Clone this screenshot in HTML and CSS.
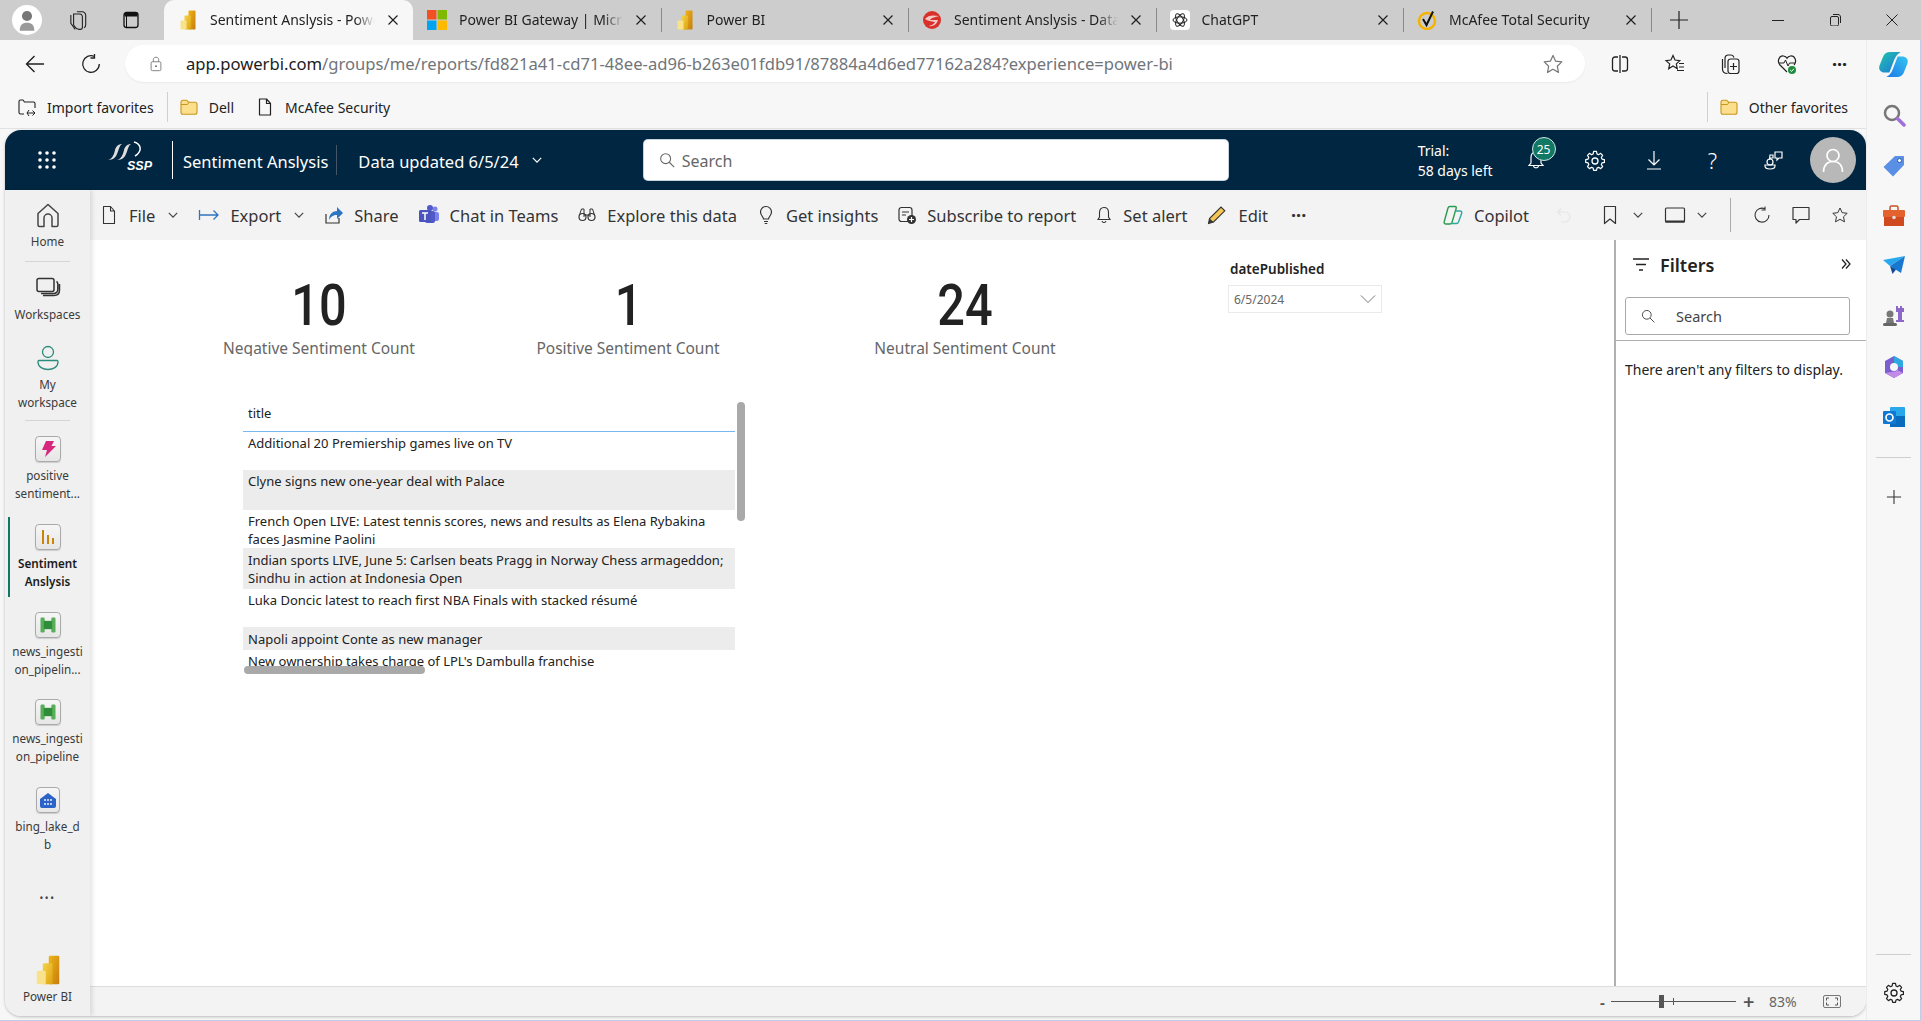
FILE: index.html
```html
<!DOCTYPE html>
<html lang="en">
<head>
<meta charset="utf-8">
<title>Sentiment Anslysis - Power BI</title>
<link rel="stylesheet" href="styles.css">
</head>
<body>
<svg class="sprite" aria-hidden="true">
  <defs>
    <linearGradient id="pbA" x1="0" x2="1" y1="0" y2="1"><stop offset="0" stop-color="#eeb51a"/><stop offset="1" stop-color="#c67c0c"/></linearGradient>
    <linearGradient id="pbB" x1="0" x2="1" y1="0" y2="1"><stop offset="0" stop-color="#f6d34a"/><stop offset="1" stop-color="#dda20f"/></linearGradient>
    <linearGradient id="cpA" x1="0" x2="1" y1="0" y2="1"><stop offset="0" stop-color="#1fc8a8"/><stop offset="1" stop-color="#1f6fe0"/></linearGradient>
    <linearGradient id="cpB" x1="0" x2="1" y1="1" y2="0"><stop offset="0" stop-color="#1e78e8"/><stop offset="1" stop-color="#33c6f0"/></linearGradient>
    <symbol id="pbi" viewBox="0 0 20 20"><rect x="10.500" y="0.500" width="7" height="19" rx="0.800" fill="url(#pbA)"/><rect x="6.500" y="5.500" width="6.500" height="14" rx="0.800" fill="url(#pbB)"/><rect x="2.500" y="10.500" width="6" height="9" rx="0.800" fill="#f9e28c"/></symbol>
    <symbol id="close" viewBox="0 0 12 12"><path d="M1.500 1.500l9 9M10.500 1.500l-9 9" fill="none" stroke="#1a1a1a" stroke-width="1.100"/></symbol>
    <symbol id="folder" viewBox="0 0 20 20"><path d="M2 5.200C2 4 2.800 3.200 4 3.200h3.600l2 2H16c1.200 0 2 .8 2 2v8c0 1.200-.8 2-2 2H4c-1.200 0-2-.8-2-2z" fill="#fbdf8c" stroke="#c8961c" stroke-width="1.100"/><path d="M2 7.500h6.500l1.500-2.200" fill="none" stroke="#c8961c" stroke-width="1"/></symbol>
    <symbol id="chev" viewBox="0 0 10 10"><path d="M1.500 3.200L5 6.800l3.500-3.600" fill="none" stroke="currentColor" stroke-width="1"/></symbol>
    <symbol id="gear" viewBox="0 0 24 24"><path d="M10.400 2.600h3.200l.6 2.800 1.700.8 2.500-1.500 2.200 2.300-1.500 2.400.8 1.800 2.700.6v3.200l-2.700.6-.8 1.800 1.500 2.400-2.200 2.300-2.500-1.500-1.700.8-.6 2.700h-3.200l-.6-2.700-1.700-.8-2.500 1.500-2.200-2.300 1.500-2.400-.8-1.800-2.700-.6v-3.200l2.700-.6.800-1.800-1.500-2.400 2.200-2.300 2.500 1.500 1.700-.8z" transform="translate(1.500 1.200) scale(.88)" fill="none" stroke="currentColor" stroke-width="1.400" stroke-linejoin="round"/><circle cx="12" cy="13" r="3" fill="none" stroke="currentColor" stroke-width="1.300"/></symbol>
    <symbol id="star" viewBox="0 0 20 20"><path d="M10 2.200l2.400 5.200 5.600.7-4.100 3.900 1.100 5.600-5-2.800-5 2.800 1.100-5.600L2 8.100l5.600-.7z" fill="none" stroke="currentColor" stroke-width="1.100" stroke-linejoin="round"/></symbol>
    <symbol id="search" viewBox="0 0 20 20"><circle cx="8.500" cy="8.500" r="5.500" fill="none" stroke="currentColor" stroke-width="1.200"/><path d="M12.500 12.500L18 18" stroke="currentColor" stroke-width="1.200"/></symbol>
    <symbol id="pipeline" viewBox="0 0 24 24"><rect x="3" y="3" width="5" height="18" rx="1.500" fill="#58ad58"/><rect x="16" y="3" width="5" height="18" rx="1.500" fill="#58ad58"/><rect x="7" y="7" width="10" height="10" fill="#2f8d3a"/></symbol>
  </defs>
</svg>

<header class="tabstrip">
  <div class="strip-left">
    <span class="profile"><svg class="ic-profile" viewBox="0 0 16 20"><circle cx="8" cy="6" r="4.500" fill="#777"/><path d="M1.500 19c0-5 2.500-7 6.500-7s6.500 2 6.500 7z" fill="#999"/></svg></span>
    <svg class="ic22 strip-ic" viewBox="0 0 20 20"><path d="M9 2.500h5c1.500 0 3 1.500 3 3v9c0 1-.5 2-1.500 2.500" fill="none" stroke="#222"/><path d="M6 4.500h5.500c1.500 0 2.500 1.500 2.500 3v9c0 1-1 2-2 2h-1c-1.500 0-3-1-4-2.500l-1-1.500V5.500z" fill="none" stroke="#222"/><path d="M3.500 5.500v7.500l4 5.500" fill="none" stroke="#222"/></svg>
    <svg class="ic20 strip-ic2" viewBox="0 0 20 20"><rect x="3" y="2.500" width="14" height="15" rx="2.500" fill="none" stroke="#111" stroke-width="1.300"/><path d="M3.500 3h13v3.500h-13z" fill="#111"/><path d="M5.500 6v11" stroke="#111"/></svg>
  </div>
  <div class="tab tab-active"><svg class="tab-ic"><use href="#pbi"/></svg><span class="tab-title">Sentiment Anslysis - Power BI</span><svg class="tab-x"><use href="#close"/></svg></div>
  <div class="tab"><svg class="tab-ic" viewBox="0 0 20 20"><rect x="0" y="0" width="9.500" height="9.500" fill="#f25022"/><rect x="10.500" y="0" width="9.500" height="9.500" fill="#7fba00"/><rect x="0" y="10.500" width="9.500" height="9.500" fill="#00a4ef"/><rect x="10.500" y="10.500" width="9.500" height="9.500" fill="#ffb900"/></svg><span class="tab-title">Power BI Gateway | Microsoft</span><svg class="tab-x"><use href="#close"/></svg></div>
  <div class="tab tab-sep"><svg class="tab-ic"><use href="#pbi"/></svg><span class="tab-title">Power BI</span><svg class="tab-x"><use href="#close"/></svg></div>
  <div class="tab tab-sep"><svg class="tab-ic" viewBox="0 0 20 20"><circle cx="10" cy="10" r="9" fill="#d9302a"/><path d="M3 9c3-4 8-4 14-3-4 1-8 2-9 4h8c-1 4-5 7-9 6 3-1 5-2 6-4-4-1-7-1-10-3z" fill="#f3c9c5"/></svg><span class="tab-title">Sentiment Anslysis - Data Factory</span><svg class="tab-x"><use href="#close"/></svg></div>
  <div class="tab tab-sep"><svg class="tab-ic" viewBox="0 0 20 20"><rect width="20" height="20" rx="4" fill="#fff"/><g fill="none" stroke="#222" stroke-width="1"><ellipse cx="10" cy="10" rx="7" ry="3.200"/><ellipse cx="10" cy="10" rx="7" ry="3.200" transform="rotate(60 10 10)"/><ellipse cx="10" cy="10" rx="7" ry="3.200" transform="rotate(120 10 10)"/></g></svg><span class="tab-title">ChatGPT</span><svg class="tab-x"><use href="#close"/></svg></div>
  <div class="tab tab-sep"><svg class="tab-ic" viewBox="0 0 20 20"><circle cx="10" cy="11" r="8" fill="none" stroke="#f5b301" stroke-width="2.500"/><path d="M6 9l3.500 6L16 1.500" fill="none" stroke="#111" stroke-width="2"/></svg><span class="tab-title">McAfee Total Security</span><svg class="tab-x"><use href="#close"/></svg></div>
  <div class="tab-end">
    <svg class="ic20" viewBox="0 0 20 20"><path d="M10 1v18M1 10h18" stroke="#222" stroke-width="1.200"/></svg>
  </div>
  <div class="winctl">
    <svg class="ic12" viewBox="0 0 12 12"><path d="M0 6.500h12" stroke="#222"/></svg>
    <svg class="ic12" viewBox="0 0 12 12"><rect x="1.500" y="2.500" width="8" height="9.500" rx="1.500" fill="none" stroke="#222"/><path d="M4 .5h5c1.500 0 2.500 1 2.500 2.500v6" fill="none" stroke="#222"/></svg>
    <svg class="ic12" viewBox="0 0 12 12"><path d="M.5.500l11 11M11.500.500l-11 11" stroke="#222"/></svg>
  </div>
</header>

<div class="below">
  <div class="main">
    <div class="addr-row">
      <svg class="ic22 back" viewBox="0 0 22 22"><path d="M20 11H3M10.500 3L2.500 11l8 8" fill="none" stroke="#222" stroke-width="1.400"/></svg>
      <svg class="ic22 reload" viewBox="0 0 22 22"><path d="M14.500 3.500A8.300 8.300 0 1 0 19.300 11" fill="none" stroke="#222" stroke-width="1.300"/><path d="M14.500 1v4h-4" fill="none" stroke="#222" stroke-width="1.300"/></svg>
      <div class="addr">
        <svg class="ic16 lock" viewBox="0 0 16 18"><rect x="2.500" y="6.500" width="11" height="10" rx="1.500" fill="none" stroke="#777"/><path d="M5 6.500V4c0-3.500 6-3.500 6 0v2.500" fill="none" stroke="#777"/><circle cx="8" cy="11.500" r="1" fill="#555"/></svg>
        <span class="url"><b>app.powerbi.com</b>/groups/me/reports/fd821a41-cd71-48ee-ad96-b263e01fdb91/87884a4d6ed77162a284?experience=power-bi</span>
        <svg class="ic22 addr-star"><use href="#star"/></svg>
      </div>
      <div class="addr-tools">
        <svg class="ic20" viewBox="0 0 20 20"><path d="M8 3H5C3.500 3 2.500 4 2.500 5.500v9C2.500 16 3.500 17 5 17h3M12 3h3c1.500 0 2.500 1 2.500 2.500v9c0 1.500-1 2.500-2.500 2.500h-3M10 1v18" fill="none" stroke="#222" stroke-width="1.300"/></svg>
        <svg class="ic22" viewBox="0 0 22 22"><path d="M9 2.500l2 4.500 4.800.6-3.500 3.300 1 4.900L9 13l-4.300 2.800 1-4.900L2 7.600 6.900 7z" fill="none" stroke="#222" stroke-width="1.200"/><path d="M15 10.500h5M15 14h5M13 17.500h7" stroke="#222" stroke-width="1.200"/></svg>
        <svg class="ic22" viewBox="0 0 22 22"><path d="M5 15V5.500C5 3.500 6.500 2 8.500 2H11c1.500 0 2.500 1 3 2.500" fill="none" stroke="#222" stroke-width="1.200"/><path d="M2.500 6v10c0 3 2 4.500 5 4.500" fill="none" stroke="#222" stroke-width="1.200"/><rect x="8" y="6" width="11" height="14.500" rx="2.500" fill="none" stroke="#222" stroke-width="1.200"/><path d="M13.500 10v7M10 13.500h7" stroke="#222" stroke-width="1.200"/></svg>
        <svg class="ic22" viewBox="0 0 22 22"><path d="M11 19L4 12C.5 8 3.500 2.500 7.500 3c1.600.2 2.800 1 3.500 2.300C11.700 4 13 3.200 14.500 3c4-.5 7 5 3.500 9" fill="none" stroke="#222" stroke-width="1.200"/><path d="M3 10h5l1.500-3 2.500 6 1.500-3H19" fill="none" stroke="#222"/><circle cx="16" cy="17" r="4" fill="#1e8e3e"/><path d="M14.200 17l1.400 1.400 2.300-2.600" fill="none" stroke="#fff"/></svg>
        <span class="more">···</span>
      </div>
    </div>
    <div class="fav-row">
      <svg class="ic20" viewBox="0 0 20 20"><path d="M7 17H3.500C2.500 17 2 16.500 2 15.500v-11C2 3.500 2.500 3 3.500 3H6l1.500 2h9c1 0 1.500.5 1.500 1.500V11" fill="none" stroke="#222" stroke-width="1.100"/><path d="M10 16h8M15.500 13.500L18 16l-2.500 2.500M12 13l-2 3 2 3" fill="none" stroke="#222"/></svg>
      <span class="fav-text">Import favorites</span>
      <span class="fav-div"></span>
      <svg class="ic20"><use href="#folder"/></svg>
      <span class="fav-text fav-gap">Dell</span>
      <svg class="ic20" viewBox="0 0 20 20"><path d="M4.500 2h7l4 4.500V18h-11z M11.500 2v4.500h4" fill="none" stroke="#222" stroke-width="1.200" stroke-linejoin="round"/></svg>
      <span class="fav-text">McAfee Security</span>
      <span class="fav-spacer"></span>
      <span class="fav-div"></span>
      <svg class="ic20"><use href="#folder"/></svg>
      <span class="fav-text">Other favorites</span>
    </div>

    <div class="app">
      <div class="appbar">
        <svg class="waffle" viewBox="0 0 20 20"><g fill="#fff"><circle cx="3" cy="3" r="1.800"/><circle cx="10" cy="3" r="1.800"/><circle cx="17" cy="3" r="1.800"/><circle cx="3" cy="10" r="1.800"/><circle cx="10" cy="10" r="1.800"/><circle cx="17" cy="10" r="1.800"/><circle cx="3" cy="17" r="1.800"/><circle cx="10" cy="17" r="1.800"/><circle cx="17" cy="17" r="1.800"/></g></svg>
        <div class="ssp">
          <svg class="ssp-mark" viewBox="0 0 40 20"><path d="M1 19C5 18 7 14 8 9 9 5 12 3 15 3 12 5 12 9 10 13 9 16 6 19 1 19z" fill="#ddd"/><path d="M10 19C14 18 16 14 17 9 18 5 21 3 24 3 21 5 21 9 19 13 18 16 15 19 10 19z" fill="#ddd"/><path d="M27 1c7 2 9 9 1 14" fill="none" stroke="#fff" stroke-width="1.500"/></svg>
          <span class="ssp-text">SSP</span>
        </div>
        <span class="app-div tall"></span>
        <span class="report-name">Sentiment Anslysis</span>
        <span class="app-div"></span>
        <span class="data-upd">Data updated 6/5/24</span>
        <svg class="ic12 upd-chev"><use href="#chev"/></svg>
        <div class="app-search"><svg class="ic18"><use href="#search"/></svg><span>Search</span></div>
        <div class="trial"><span>Trial:</span><span>58 days left</span></div>
        <div class="bell">
          <svg class="ic20" viewBox="0 0 20 20"><path d="M10 2c3.500 0 5 2.500 5 5.500V13l2 2.500H3L5 13V7.500C5 4.500 6.500 2 10 2zM7.500 16c.3 2.500 4.700 2.500 5 0" fill="none" stroke="#fff" stroke-width="1.200"/></svg>
          <span class="badge">25</span>
        </div>
        <svg class="ic24 app-ic"><use href="#gear"/></svg>
        <svg class="ic20 app-ic" viewBox="0 0 20 20"><path d="M10 1v14M4.500 9.500L10 15l5.500-5.500M3 19h14" fill="none" stroke="#fff" stroke-width="1.200"/></svg>
        <span class="help">?</span>
        <svg class="ic22 app-ic" viewBox="0 0 22 22"><circle cx="7" cy="13" r="3" fill="none" stroke="#fff" stroke-width="1.200"/><path d="M2 16v1c0 4 10 4 10 0v-1z" fill="none" stroke="#fff" stroke-width="1.200"/><path d="M12 3h7v6h-3l-2 2V9h-2z M7 6h3v3H8L6.500 10z" fill="none" stroke="#fff" stroke-width="1.200"/></svg>
        <span class="avatar"><svg class="ic28" viewBox="0 0 28 28"><circle cx="14" cy="9.500" r="6" fill="none" stroke="#fff" stroke-width="1.700"/><path d="M4.500 26c0-7 4-10.500 9.500-10.500S23.500 19 23.500 26" fill="none" stroke="#fff" stroke-width="1.700"/></svg></span>
      </div>

      <div class="workspace">
        <nav class="nav">
          <div class="nav-item n-home"><svg class="ic26" viewBox="0 0 26 26"><path d="M3 11.500L13 2.500l10 9V23a1.500 1.500 0 0 1-1.500 1.500H17V16a4 4 0 0 0-8 0v8.500H4.500A1.500 1.500 0 0 1 3 23z" fill="none" stroke="#444" stroke-width="1.500" stroke-linejoin="round"/></svg><span>Home</span></div>
          <div class="nav-div"></div>
          <div class="nav-item n-work"><svg class="ic26" viewBox="0 0 26 26"><rect x="2" y="3.500" width="17" height="13" rx="2" fill="none" stroke="#333" stroke-width="1.500"/><path d="M21.500 6.500c1 .5 1.300 1.300 1.300 2.500v5c0 3-1.500 4.500-4.500 4.500H6M24.500 9v6c0 3.500-2 5.500-5.500 5.500H8" fill="none" stroke="#333" stroke-width="1.500"/></svg><span>Workspaces</span></div>
          <div class="nav-item n-my"><svg class="ic26" viewBox="0 0 26 26"><circle cx="13" cy="7" r="5.500" fill="none" stroke="#2c8c7c" stroke-width="1.300"/><path d="M4 15.500h18a1 1 0 0 1 1 1v.5c0 5-5 7.500-10 7.500S3 22 3 17v-.5a1 1 0 0 1 1-1z" fill="none" stroke="#2c8c7c" stroke-width="1.300"/></svg><span>My<br>workspace</span></div>
          <div class="nav-div"></div>
          <div class="nav-item n-pos"><span class="tile"><svg class="ic18" viewBox="0 0 18 18"><path d="M7 1h8l-2.500 5H17L6 17l2-7H3z" fill="#d6287c"/></svg></span><span class="nowrap">positive<br>sentiment...</span></div>
          <div class="nav-item n-sent"><span class="tile"><svg class="ic18" viewBox="0 0 18 18"><g fill="#c8860d"><rect x="3" y="2" width="2" height="14"/><rect x="8" y="7" width="2" height="9"/><rect x="13" y="10" width="2" height="6"/></g></svg></span><span class="nav-strong">Sentiment<br>Anslysis</span></div>
          <div class="nav-item n-news1"><span class="tile"><svg class="ic20"><use href="#pipeline"/></svg></span><span>news_ingesti<br>on_pipelin...</span></div>
          <div class="nav-item n-news2"><span class="tile"><svg class="ic20"><use href="#pipeline"/></svg></span><span>news_ingesti<br>on_pipeline</span></div>
          <div class="nav-item n-bing"><span class="tile tile-narrow"><svg class="ic18" viewBox="0 0 18 18"><path d="M1 8l8-6 8 6v7a2 2 0 0 1-2 2H3a2 2 0 0 1-2-2z" fill="#2b63c9"/><g fill="#fff"><circle cx="6" cy="9" r=".9"/><circle cx="9" cy="9" r=".9"/><circle cx="12" cy="9" r=".9"/><circle cx="6" cy="13" r=".9"/><circle cx="9" cy="13" r=".9"/><circle cx="12" cy="13" r=".9"/></g></svg></span><span>bing_lake_d<br>b</span></div>
          <div class="nav-dots">•••</div>
          <div class="nav-item n-pbi"><svg class="ic30"><use href="#pbi"/></svg><span>Power BI</span></div>
        </nav>

        <div class="report">
          <div class="toolbar">
            <div class="tb"><svg class="ic20" viewBox="0 0 20 20"><path d="M4.500 1.500h7l4 4.500v12.500h-11z M11.500 1.500V6h4" fill="none" stroke="#333" stroke-width="1.100" stroke-linejoin="round"/></svg><span>File</span><svg class="ic12 tb-chev"><use href="#chev"/></svg></div>
            <div class="tb"><svg class="ic22" viewBox="0 0 22 22"><path d="M1.500 6v10M2 11h18M15.500 6.500L20 11l-4.500 4.500" fill="none" stroke="#2f74c0" stroke-width="1.300"/></svg><span>Export</span><svg class="ic12 tb-chev"><use href="#chev"/></svg></div>
            <div class="tb"><svg class="ic20" viewBox="0 0 20 20"><path d="M2 9v9h13v-5" fill="none" stroke="#333" stroke-width="1.200"/><path d="M5 15c0-6 4-9 8-9V2l6 6-6 6v-4c-4 0-6 1.500-8 5z" fill="#2f74c0"/></svg><span>Share</span></div>
            <div class="tb"><svg class="ic22" viewBox="0 0 22 22"><circle cx="17" cy="5" r="2.500" fill="#7b83eb"/><circle cx="12" cy="4" r="3" fill="#5059c9"/><rect x="13" y="8" width="8" height="9" rx="2" fill="#7b83eb"/><rect x="7" y="7" width="10" height="12" rx="2" fill="#5059c9"/><rect x="1" y="6" width="12" height="12" rx="1.500" fill="#4b53bc"/><path d="M4 9h6M7 9v7" stroke="#fff" stroke-width="1.500"/></svg><span>Chat in Teams</span></div>
            <div class="tb"><svg class="ic20" viewBox="0 0 20 20"><circle cx="5.500" cy="12" r="3.500" fill="none" stroke="#333" stroke-width="1.200"/><circle cx="14.500" cy="12" r="3.500" fill="none" stroke="#333" stroke-width="1.200"/><path d="M2.500 10l2-6h2.500v8M17.500 10l-2-6H13v8M7 10h6" fill="none" stroke="#333"/></svg><span>Explore this data</span></div>
            <div class="tb"><svg class="ic20" viewBox="0 0 20 20"><path d="M7.500 14c0-2-3-3.500-3-7a5.500 5.500 0 0 1 11 0c0 3.500-3 5-3 7zM8 16.500h4M8.700 18.500h2.600" fill="none" stroke="#333" stroke-width="1.200"/></svg><span>Get insights</span></div>
            <div class="tb"><svg class="ic20" viewBox="0 0 20 20"><rect x="2" y="2.500" width="13" height="14" rx="2.500" fill="none" stroke="#333" stroke-width="1.200"/><path d="M5 7h7M5 10h4" stroke="#333" stroke-width="1.200"/><circle cx="14.500" cy="14.500" r="4.500" fill="#333"/><path d="M14.500 12v5M12 14.500h5" stroke="#fff" stroke-width="1.200"/></svg><span>Subscribe to report</span></div>
            <div class="tb"><svg class="ic18" viewBox="0 0 18 18"><path d="M9 1.500c3 0 4.500 2.200 4.500 5V11l1.500 2.500H3L4.500 11V6.500c0-2.800 1.500-5 4.500-5zM7 15c.3 2 3.700 2 4 0" fill="none" stroke="#333" stroke-width="1.100"/></svg><span>Set alert</span></div>
            <div class="tb"><svg class="ic22" viewBox="0 0 22 22"><path d="M2.500 19.500l1-5L15 3l3.800 3.800L7.500 18z" fill="#f4c653" stroke="#333" stroke-width="1.100"/><path d="M2.500 19.500l1-5 4 3.500z" fill="#333"/></svg><span>Edit</span></div>
            <span class="tb-more">···</span>
            <span class="tb-spacer"></span>
            <div class="tb"><svg class="ic22" viewBox="0 0 22 22"><path d="M8 2.500h5c1 0 1.500.8 1.200 1.700L10 18.500c-.4 1-1.200 1.500-2.200 1.500H4c-1.500 0-2.200-1-1.800-2.300L6 4C6.300 3 7 2.500 8 2.500z" fill="none" stroke="#2a9a50" stroke-width="1.400"/><path d="M13 7h5c1.500 0 2 1 1.700 2.300L16.500 18c-.3 1-1 1.500-2 1.500H9" fill="none" stroke="#30a8a0" stroke-width="1.400"/></svg><span>Copilot</span></div>
            <svg class="ic18 tb-undo" viewBox="0 0 18 18"><path d="M6 2.500L2.500 6 6 9.500M3 6h7a5 5 0 0 1 0 10H6" fill="none" stroke="#e6e6e6" stroke-width="1.200"/></svg>
            <div class="tb tb-tight"><svg class="ic20" viewBox="0 0 20 20"><path d="M4.500 1.500h11v17L10 14l-5.500 4.500z" fill="none" stroke="#333" stroke-width="1.200" stroke-linejoin="round"/></svg><svg class="ic12 tb-chev"><use href="#chev"/></svg></div>
            <div class="tb tb-rect"><svg class="ic22" viewBox="0 0 22 22"><rect x="1.500" y="4" width="19" height="14" rx="1" fill="none" stroke="#333" stroke-width="1.200"/><path d="M1.500 17.500h19" stroke="#333" stroke-width="1.800"/></svg><svg class="ic12 tb-chev"><use href="#chev"/></svg></div>
            <span class="tb-div"></span>
            <svg class="ic18 tb-r" viewBox="0 0 18 18"><path d="M12 2.800A7 7 0 1 0 16 9" fill="none" stroke="#333" stroke-width="1.100"/><path d="M12 .5v3.500H8.500" fill="none" stroke="#333" stroke-width="1.100"/></svg>
            <svg class="ic20 tb-r" viewBox="0 0 20 20"><path d="M2 2.500h16v12H8.500L5 18v-3.500H2z" fill="none" stroke="#333" stroke-width="1.200" stroke-linejoin="round"/></svg>
            <svg class="ic18 tb-r"><use href="#star"/></svg>
          </div>

          <div class="report-body">
            <div class="canvas">
              <div class="kpi kpi-neg"><div class="kpi-val"><span>10</span></div><div class="kpi-lab">Negative Sentiment Count</div></div>
              <div class="kpi kpi-pos"><div class="kpi-val"><span>1</span></div><div class="kpi-lab">Positive Sentiment Count</div></div>
              <div class="kpi kpi-neu"><div class="kpi-val"><span>24</span></div><div class="kpi-lab">Neutral Sentiment Count</div></div>
              <div class="slicer">
                <div class="slicer-title">datePublished</div>
                <div class="slicer-box"><span>6/5/2024</span><svg class="slicer-chev" viewBox="0 0 16 10"><path d="M1 1.500L8 8.500l7-7" fill="none" stroke="#666" stroke-width=".9"/></svg></div>
              </div>
              <div class="table">
                <div class="table-clip">
                  <div class="th">title</div>
                  <div class="tr r38">Additional 20 Premiership games live on TV</div>
                  <div class="tr r40 alt">Clyne signs new one-year deal with Palace</div>
                  <div class="tr r38">French Open LIVE: Latest tennis scores, news and results as Elena Rybakina faces Jasmine Paolini</div>
                  <div class="tr r41 alt">Indian sports LIVE, June 5: Carlsen beats Pragg in Norway Chess armageddon; Sindhu in action at Indonesia Open</div>
                  <div class="tr r38">Luka Doncic latest to reach first NBA Finals with stacked résumé</div>
                  <div class="tr r23 alt">Napoli appoint Conte as new manager</div>
                  <div class="tr r38">New ownership takes charge of LPL's Dambulla franchise</div>
                </div>
                <span class="sb-v"></span>
                <span class="sb-h"></span>
              </div>
            </div>
            <aside class="filters">
              <div class="f-head">
                <svg class="ic18" viewBox="0 0 18 18"><path d="M1 3h16M4 8.500h10M7 14h4" stroke="#222" stroke-width="1.400"/></svg>
                <span class="f-title">Filters</span>
                <svg class="ic12 f-coll" viewBox="0 0 12 12"><path d="M2 1.500L6 6l-4 4.500M6 1.500L10 6l-4 4.500" fill="none" stroke="#222" stroke-width="1.300"/></svg>
              </div>
              <div class="f-search"><svg class="ic16"><use href="#search"/></svg><span>Search</span></div>
              <div class="f-line"></div>
              <p class="f-empty">There aren't any filters to display.</p>
            </aside>
          </div>

          <div class="status">
            <span class="z-minus">-</span>
            <span class="slider"><span class="thumb"></span><span class="tick"></span></span>
            <span class="z-plus">+</span>
            <span class="z-pct">83%</span>
            <svg class="fit" viewBox="0 0 18 13"><rect x=".5" y=".5" width="17" height="12" rx="1.500" fill="none" stroke="#777"/><path d="M6 3H3.500v2.500M12 3h2.500v2.500M6 10H3.500V7.500M12 10h2.500V7.500" fill="none" stroke="#555"/></svg>
          </div>
        </div>
      </div>
    </div>
    <div class="app-foot"></div>
  </div>

  <aside class="side">
    <svg class="s-copilot" viewBox="0 0 30 30" preserveAspectRatio="none"><path d="M12 1C8 1 6 3 5 6L1.500 16C0 21 3 24 7 24h4l5-15c1-3 3-6 6-8z" fill="url(#cpA)"/><path d="M18 29c4 0 6-2 7-5l3.500-10C30 9 27 6 23 6h-4l-5 15c-1 3-3 6-6 8z" fill="url(#cpB)"/></svg>
    <svg class="s-ic" viewBox="0 0 24 24"><circle cx="10" cy="10" r="7" fill="none" stroke="#777" stroke-width="2.500"/><path d="M15.500 15.500L22 22" stroke="#a070d8" stroke-width="3.500" stroke-linecap="round"/></svg>
    <svg class="s-ic" viewBox="0 0 24 24"><path d="M13 2h8c.6 0 1 .4 1 1v8L11 22.500 1.500 13z" fill="#5a8fe6"/><circle cx="17.500" cy="6.500" r="2" fill="#fff" stroke="#2c5db0"/></svg>
    <svg class="s-ic" viewBox="0 0 24 24"><path d="M8 6V3.500C8 2.500 8.500 2 9.500 2h5c1 0 1.500.5 1.500 1.500V6" fill="none" stroke="#c4532a" stroke-width="1.500"/><rect x="1" y="6" width="22" height="7" rx="1" fill="#e4622e"/><rect x="2" y="13" width="20" height="9" fill="#d0491f"/><circle cx="12" cy="13.500" r="1.800" fill="#ddd"/></svg>
    <svg class="s-ic" viewBox="0 0 24 24"><path d="M1 6l22-4-15 10z" fill="#29a8ee"/><path d="M23 2L19 19 8 12z" fill="#1878d0"/><path d="M8 12l2.500 8 3.500-4.500z" fill="#114a94"/></svg>
    <svg class="s-ic" viewBox="0 0 24 24"><circle cx="8" cy="10" r="3.500" fill="#777"/><path d="M5 14h6l1 5H4z" fill="#777"/><rect x="1" y="19" width="14" height="3" rx="1.500" fill="#666"/><path d="M14 2h2v2h2V2h2v2h2V2v6h-2v8h2v2h-8v-2h2V8h-2z" fill="#8c68c8"/></svg>
    <svg class="s-ic" viewBox="0 0 24 24"><path d="M12 1l9 5v12l-9 5-9-5V6z" fill="#7a5ed0"/><path d="M12 1l9 5v6h-5.500c0-2-1.500-3.500-3.500-3.500z" fill="#2ea8e0"/><path d="M3 18l9 5 9-5-5.500-3c-1 1-2 1.500-3.500 1.500z" fill="#c28be8"/><circle cx="12" cy="12" r="4" fill="#f7f7f7"/></svg>
    <svg class="s-ic" viewBox="0 0 24 24"><rect x="8" y="2" width="15" height="20" rx="1" fill="#28a8ea"/><path d="M8 11l15 0v11H8z" fill="#0a6cbd"/><rect x="1" y="6" width="13" height="13" rx="1" fill="#0f78d4"/><circle cx="7.500" cy="12.500" r="3.500" fill="none" stroke="#fff" stroke-width="1.700"/></svg>
    <span class="s-div"></span>
    <svg class="s-plus" viewBox="0 0 18 18"><path d="M9 1v16M1 9h16" stroke="#333" stroke-width="1.200"/></svg>
    <span class="s-spacer"></span>
    <span class="s-div s-div2"></span>
    <svg class="s-gear"><use href="#gear"/></svg>
  </aside>
</div>
</body>
</html>
```

FILE: styles.css
```css
* { box-sizing: border-box; }
html, body { margin: 0; height: 100%; }
body {
  width: 1921px; height: 1021px; overflow: hidden;
  display: flex; flex-direction: column;
  font-family: "Noto Sans", "Open Sans", sans-serif;
  color: #222; background: #f7f7f7;
  border-bottom: 1px solid #c3cce6;
}
svg { display: block; flex: none; }
.sprite { width: 0; height: 0; overflow: hidden; }
.ic12 { width: 12px; height: 12px; }
.ic16 { width: 16px; height: 16px; }
.ic18 { width: 18px; height: 18px; }
.ic20 { width: 20px; height: 20px; }
.ic22 { width: 22px; height: 22px; }
.ic24 { width: 24px; height: 24px; }
.ic26 { width: 26px; height: 26px; }
.ic28 { width: 28px; height: 28px; }
.ic30 { width: 30px; height: 30px; }

/* tab strip */
.tabstrip { height: 40px; flex: none; display: flex; background: #cdcdcd; font-size: 14px; }
.strip-left { width: 164px; display: flex; align-items: center; padding-left: 12px; gap: 25px; }
.profile { width: 30px; height: 30px; border-radius: 50%; background: #fff; display: flex; align-items: center; justify-content: center; }
.ic-profile { width: 18px; height: 23px; }
.strip-ic2 { margin-left: 7px; }
.tab { width: 247.5px; height: 40px; display: flex; align-items: center; padding: 0 14px; position: relative; }
.tab-sep::before { content: ""; position: absolute; left: 0; top: 8px; bottom: 8px; width: 1px; background: #8a8a8a; }
.tab-active { background: #f7f7f7; border-radius: 10px 10px 0 0; width: 249px; }
.tab-ic { width: 20px; height: 20px; margin-right: 12px; }
.tab-title { flex: 1; min-width: 0; white-space: nowrap; overflow: hidden; color: #222; margin-top: -2px; -webkit-mask-image: linear-gradient(to right, #000 88%, transparent); mask-image: linear-gradient(to right, #000 88%, transparent); }
.tab-x { width: 12px; height: 12px; margin-left: 12px; }
.tab-end { width: 56px; position: relative; display: flex; align-items: center; padding-left: 18px; }
.tab-end::before { content: ""; position: absolute; left: 0; top: 8px; bottom: 8px; width: 1px; background: #8a8a8a; }
.winctl { flex: 1; display: flex; align-items: center; padding-left: 65px; gap: 45px; }

/* layout below strip */
.below { flex: 1; min-height: 0; display: flex; }
.main { flex: 1; min-width: 0; display: flex; flex-direction: column; }

/* address */
.addr-row { height: 42px; flex: none; padding-top: 5px; display: flex; align-items: center; }
.back { margin-left: 24px; }
.reload { margin-left: 34px; }
.addr { width: 1460px; height: 37px; margin-left: 23px; flex: none; background: #fff; border-radius: 19px; display: flex; align-items: center; padding-left: 23px; box-shadow: 0 1px 2px rgba(0,0,0,.06); }
.lock { margin-right: 22px; }
.url { flex: 1; font-size: 16.640px; color: #70757a; white-space: nowrap; }
.url b { font-weight: 400; color: #1c1c1c; }
.addr-star { color: #777; margin-right: 21px; }
.addr-tools { flex: 1; display: flex; align-items: center; padding-left: 25px; gap: 34px; }
.more { font-size: 18px; font-weight: 700; line-height: 1; }

/* favourites */
.fav-row { height: 47px; flex: none; display: flex; align-items: center; padding-left: 17px; padding-top: 4px; font-size: 14px; gap: 10px; border-bottom: 1px solid #e2e2e2; }
.fav-text { white-space: nowrap; }
.fav-gap { margin-right: 11px; }
.fav-div { width: 1px; height: 30px; background: #d0d0d0; margin: 0 1px 0 3px; }
.fav-spacer { flex: 1; }
.fav-row .fav-text:last-child { margin-right: 18px; }

/* app */
.app { flex: none; height: 886px; margin-left: 5px; margin-top: 1px; background: #fff; border-radius: 16px; overflow: hidden; display: flex; flex-direction: column; box-shadow: 0 1px 3px rgba(0,0,0,.25); }
.app-foot { flex: 1; }
.appbar { height: 60px; flex: none; background: #012641; color: #fff; display: flex; align-items: center; }
.waffle { width: 20px; height: 20px; margin-left: 32px; }
.ssp { width: 60px; height: 44px; margin-left: 45px; position: relative; }
.ssp-mark { width: 40px; height: 20px; margin: 3px 0 0 5px; }
.ssp-text { position: absolute; left: 25px; top: 22px; font-size: 12.500px; font-weight: 700; font-style: italic; color: #fff; line-height: 1; font-family: "Liberation Sans", sans-serif; }
.app-div { width: 1px; height: 30px; background: #456; margin: 0 12px 0 8px; }
.app-div.tall { height: 38px; background: #fff; margin: 0 10px; }
.report-name, .data-upd { font-size: 16.500px; white-space: nowrap; padding-top: 2px; }
.data-upd { margin-left: 9px; }
.upd-chev { margin-left: 12px; color: #fff; }
.app-search { width: 584px; height: 40px; margin-left: 101px; background: #fff; border-radius: 4px; color: #666; display: flex; align-items: center; padding-left: 14px; gap: 6px; font-size: 16px; box-shadow: 0 0 0 1px #c9d3dc; }
.app-search span { padding-top: 2px; }
.trial { margin-left: 190px; display: flex; flex-direction: column; font-size: 14px; line-height: 20px; width: 108px; white-space: nowrap; padding-top: 2px; }
.bell { width: 20px; height: 20px; position: relative; color: #fff; }
.badge { position: absolute; left: 6px; top: -13px; width: 24px; height: 24px; border-radius: 50%; background: #117865; border: 1px solid #cfe6e0; color: #fff; font-size: 12px; display: flex; align-items: center; justify-content: center; }
.app-ic { color: #fff; }
.ic24.app-ic { margin-left: 37px; }
.ic20.app-ic { margin-left: 37px; }
.help { font-size: 22px; font-weight: 300; margin-left: 44px; width: 14px; line-height: 1; }
.ic22.app-ic { margin-left: 41px; }
.avatar { width: 46px; height: 46px; margin-left: 25px; border-radius: 50%; background: #b8b8b8; display: flex; align-items: center; justify-content: center; }

/* workspace */
.workspace { flex: 1; min-height: 0; display: flex; }
.nav { width: 85px; flex: none; background: #f0f0f0; box-shadow: 2px 0 5px rgba(0,0,0,.12); z-index: 1; display: flex; flex-direction: column; align-items: center; font-size: 11.700px; line-height: 18px; color: #3a3a3a; }
.nav-item { display: flex; flex-direction: column; align-items: center; text-align: center; width: 100%; }
.nowrap { white-space: nowrap; }
.nav-item > svg, .tile { margin-bottom: 4px; }
.nav-div { width: 45px; height: 1px; background: #d5d5d5; flex: none; }
.n-home { padding-top: 12px; margin-bottom: 11px; }
.n-work { padding-top: 13px; }
.n-my { padding-top: 22px; margin-bottom: 9px; }
.n-pos { padding-top: 15px; }
.n-sent { margin-top: 15px; position: relative; padding-top: 7px; padding-bottom: 7px; }
.n-sent::before { content: ""; position: absolute; left: 3px; top: 0; bottom: 0; width: 2px; background: #117865; }
.nav-strong { font-weight: 600; color: #1a1a1a; }
.n-news1 { margin-top: 15px; }
.n-news2 { margin-top: 21px; }
.n-bing { margin-top: 22px; }
.tile { width: 26px; height: 26px; flex: none; border-radius: 4px; background: linear-gradient(#f6f6f6, #e6e6e6); border: 1px solid #aaa; display: flex; align-items: center; justify-content: center; box-shadow: 0 1px 1px rgba(0,0,0,.15); }
.tile-narrow { width: 24px; }
.nav-dots { margin-top: 36px; font-size: 10px; letter-spacing: 1.500px; color: #444; line-height: 18px; }
.n-pbi { margin-top: auto; margin-bottom: 11px; }
.nav-item.n-pbi > svg { margin-bottom: 2px; }

/* report */
.report { flex: 1; min-width: 0; display: flex; flex-direction: column; }
.toolbar { height: 50px; flex: none; background: #f3f3f3; display: flex; align-items: center; padding-left: 9px; padding-right: 17px; font-size: 16.500px; color: #333; gap: 19px; }
.tb { display: flex; align-items: center; gap: 10px; white-space: nowrap; }
.tb-chev { margin-left: 2px; color: #444; }
.tb-more { font-size: 18px; font-weight: 700; line-height: 1; margin-left: 4px; }
.tb-spacer { flex: 1; }
.tb-undo { margin-left: 7px; margin-right: 5px; }
.tb-tight { margin-left: 3px; }
.tb-rect { gap: 8px; margin-left: 1px; }
.tb-div { width: 1px; height: 34px; background: #aaa; margin: 0 2px 0 3px; }
.tb-r { margin-left: 1px; }
.report-body { flex: 1; min-height: 0; display: flex; }

/* free canvas of report visuals */
.canvas { flex: 1; position: relative; background: #fff; }
.kpi { position: absolute; top: 35px; width: 240px; text-align: center; }
.kpi-neg { left: 109px; }
.kpi-pos { left: 418px; }
.kpi-neu { left: 755px; }
.kpi-val { font-family: Roboto, sans-serif; font-size: 58px; font-weight: 500; line-height: 60px; color: #222; }
.kpi-val span { display: inline-block; transform: scaleX(.84); }
.kpi-lab { font-size: 15.500px; line-height: 20px; height: 18px; overflow: hidden; margin-top: 3px; color: #666; }
.slicer { position: absolute; left: 1138px; top: 19px; width: 154px; font-size: 13.500px; }
.slicer-title { font-weight: 600; color: #222; padding-left: 2px; line-height: 20px; }
.slicer-box { height: 28px; margin-top: 6px; border: 1px solid #eaeaea; display: flex; align-items: center; justify-content: space-between; padding: 0 5px; font-size: 12px; color: #666; }
.slicer-chev { width: 16px; height: 10px; }
.table { position: absolute; left: 153px; top: 150px; width: 503px; height: 286px; font-size: 13px; line-height: 18px; color: #222; }
.table-clip { width: 492px; height: 276px; overflow: hidden; }
.th { height: 42px; padding: 14px 0 0 5px; border-bottom: 1.500px solid #78b8f0; }
.tr { padding: 2px 2px 0 5px; overflow: hidden; }
.r38 { height: 38px; }
.r40 { height: 40px; }
.r41 { height: 41px; padding-top: 3px; }
.r23 { height: 23px; padding-top: 3px; }
.alt { background: #ececec; }
.sb-v { position: absolute; left: 493.500px; top: 12px; width: 8px; height: 119px; border-radius: 4px; background: #a9a9a9; }
.sb-h { position: absolute; left: 1px; top: 276px; width: 181px; height: 8px; border-radius: 4px; background: #a9a9a9; }

/* filters */
.filters { width: 252px; flex: none; border-left: 2px solid #b0b0b0; background: #fff; }
.f-head { height: 50px; display: flex; align-items: center; padding-left: 16px; }
.f-title { font-size: 18px; font-weight: 600; margin-left: 10px; color: #222; }
.f-coll { margin-left: auto; margin-right: 14px; margin-top: -3px; }
.f-search { height: 38px; margin: 7px 16px 0 9px; border: 1px solid #aaa; border-radius: 3px; display: flex; align-items: center; padding-left: 14px; gap: 20px; font-size: 14.500px; color: #444; }
.f-line { height: 1px; background: #b0b0b0; margin-top: 5px; }
.f-empty { margin: 19px 0 0 9px; font-size: 14px; color: #222; white-space: nowrap; }

/* status */
.status { height: 30px; flex: none; background: #f3f3f3; border-top: 1px solid #ddd; display: flex; align-items: center; padding-left: 1510px; color: #555; font-size: 15px; }
.z-minus { width: 9px; font-weight: 700; }
.slider { width: 125px; height: 1px; background: #555; position: relative; margin-left: 2px; }
.thumb { position: absolute; left: 48px; top: -6px; width: 5px; height: 13px; background: #555; }
.tick { position: absolute; left: 62px; top: -3px; width: 1px; height: 7px; background: #555; }
.z-plus { font-size: 20px; font-weight: 600; margin-left: 7px; width: 26px; line-height: 1; }
.z-pct { font-size: 14px; color: #666; width: 54px; }
.fit { width: 18px; height: 13px; }

/* side */
.side { width: 55px; flex: none; display: flex; flex-direction: column; align-items: center; background: #f7f7f7; border-left: 1px solid #ececec; border-right: 1px solid #c3cce6; padding-top: 11px; padding-bottom: 16px; gap: 26.300px; }
.s-ic { width: 24px; height: 24px; }
.s-copilot { width: 31px; height: 27px; margin-bottom: -1px; }
.s-div { width: 35px; height: 1px; background: #cfcfcf; margin-top: 2px; }
.s-plus { width: 16px; height: 16px; margin-top: 4px; }
.s-spacer { flex: 1; }
.s-div2 { margin: 0 0 -1px; }
.s-gear { width: 24px; height: 24px; color: #222; }
```
